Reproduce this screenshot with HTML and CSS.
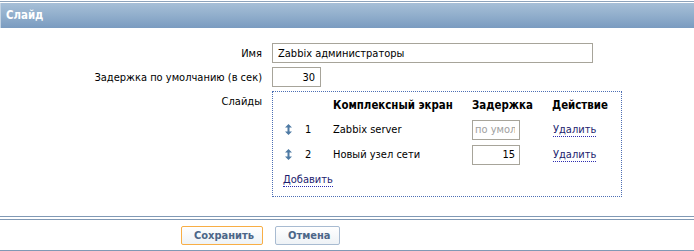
FILE: index.html
```html
<!DOCTYPE html>
<html lang="ru">
<head>
  <meta charset="UTF-8">
  <title>Слайд</title>
  <link rel="stylesheet" href="styles.css">
</head>
<body>
<div class="topline"></div>
<header class="bar">Слайд</header>
<form class="form">
  <label class="lbl" for="name">Имя</label>
  <div class="fld"><input id="name" class="txt wide" type="text" value="Zabbix администраторы"></div>

  <label class="lbl" for="delay">Задержка по умолчанию (в сек)</label>
  <div class="fld"><input id="delay" class="txt num" type="text" value="30"></div>

  <div class="lbl slides-lbl">Слайды</div>
  <div class="fld">
    <div class="slides">
      <div class="row head">
        <span></span><span></span>
        <span>Комплексный экран</span>
        <span>Задержка</span>
        <span>Действие</span>
      </div>
      <div class="row">
        <svg class="drag" width="7" height="11" viewBox="0 0 7 11"><path d="M3.5 0 L7 3.5 H4.5 V7.5 H7 L3.5 11 L0 7.5 H2.5 V3.5 H0 Z" fill="#4e7aa4"/></svg>
        <span>1</span>
        <span>Zabbix server</span>
        <span><input class="txt small" type="text" placeholder="по умолчанию"></span>
        <span><a href="#" class="link">Удалить</a></span>
      </div>
      <div class="row">
        <svg class="drag" width="7" height="11" viewBox="0 0 7 11"><path d="M3.5 0 L7 3.5 H4.5 V7.5 H7 L3.5 11 L0 7.5 H2.5 V3.5 H0 Z" fill="#4e7aa4"/></svg>
        <span>2</span>
        <span>Новый узел сети</span>
        <span><input class="txt small" type="text" value="15"></span>
        <span><a href="#" class="link">Удалить</a></span>
      </div>
      <div class="add"><a href="#" class="link">Добавить</a></div>
    </div>
  </div>
</form>
<footer class="foot">
  <div class="foot-inner">
    <button class="btn save" type="button">Сохранить</button>
    <button class="btn" type="button">Отмена</button>
  </div>
</footer>
</body>
</html>
```

FILE: styles.css
```css
*{box-sizing:border-box}
body{margin:0;padding-top:1px;font-family:"DejaVu Sans Condensed","DejaVu Sans",sans-serif;font-size:11px;color:#000;background:#fff}

.topline{height:1px;background:#8ea3bb;margin-bottom:1px}
.bar{height:25px;line-height:24px;padding-left:5px;color:#fff;font-weight:bold;font-size:11.4px;
  background:linear-gradient(#a7bfd7,#93b0cd 45%,#7a9bc0);border-left:1px solid #c3d3e3}

.form{display:grid;grid-template-columns:262px 1fr;column-gap:10px;row-gap:4px;margin:15px 0 0}
.lbl{text-align:right;align-self:center}
.slides-lbl{align-self:start;padding-top:4px}
.fld{display:flex}

.txt{font:inherit;height:20px;border:1px solid #a7a49a;padding:0 5px;color:#000;background:#fff}
.wide{width:321px}
.num{width:49px;text-align:right}
.small{width:48px;text-align:right;padding:0 4px 0 2px}
.small::placeholder{color:#a0a0a0;text-align:left}

.slides{width:350px;border:1px dotted #4d6fb4;padding:0 10px 3px 10px}
.row{display:grid;grid-template-columns:22px 28px 139px 80px auto;height:25px;align-items:center}
.row.head{font-weight:bold;font-size:11.4px}
.drag{margin-left:2px}
.add{height:26px;display:flex;align-items:center}
.link{color:#1c1c6e;text-decoration:none;border-bottom:1px dotted #2d2db0;margin-left:1px}
.add .link{margin-left:0}

.foot{margin-top:19px;border-top:1px solid #8199b5}
.foot-inner{margin-top:2px;border-top:1px solid #8199b5;border-bottom:1px solid #8199b5;
  height:32px;padding:6px 0 0 181px;display:flex;gap:12px;align-items:flex-start}
.btn{font:bold 11px "DejaVu Sans Condensed","DejaVu Sans",sans-serif;color:#4c6688;height:19px;padding:0 12px;
  background:linear-gradient(#fff,#eef2f6);border:1px solid #a8bbd1;border-radius:2px}
.btn.save{border-color:#f8ae45;width:82px}
.btn:not(.save){width:65px}
```
